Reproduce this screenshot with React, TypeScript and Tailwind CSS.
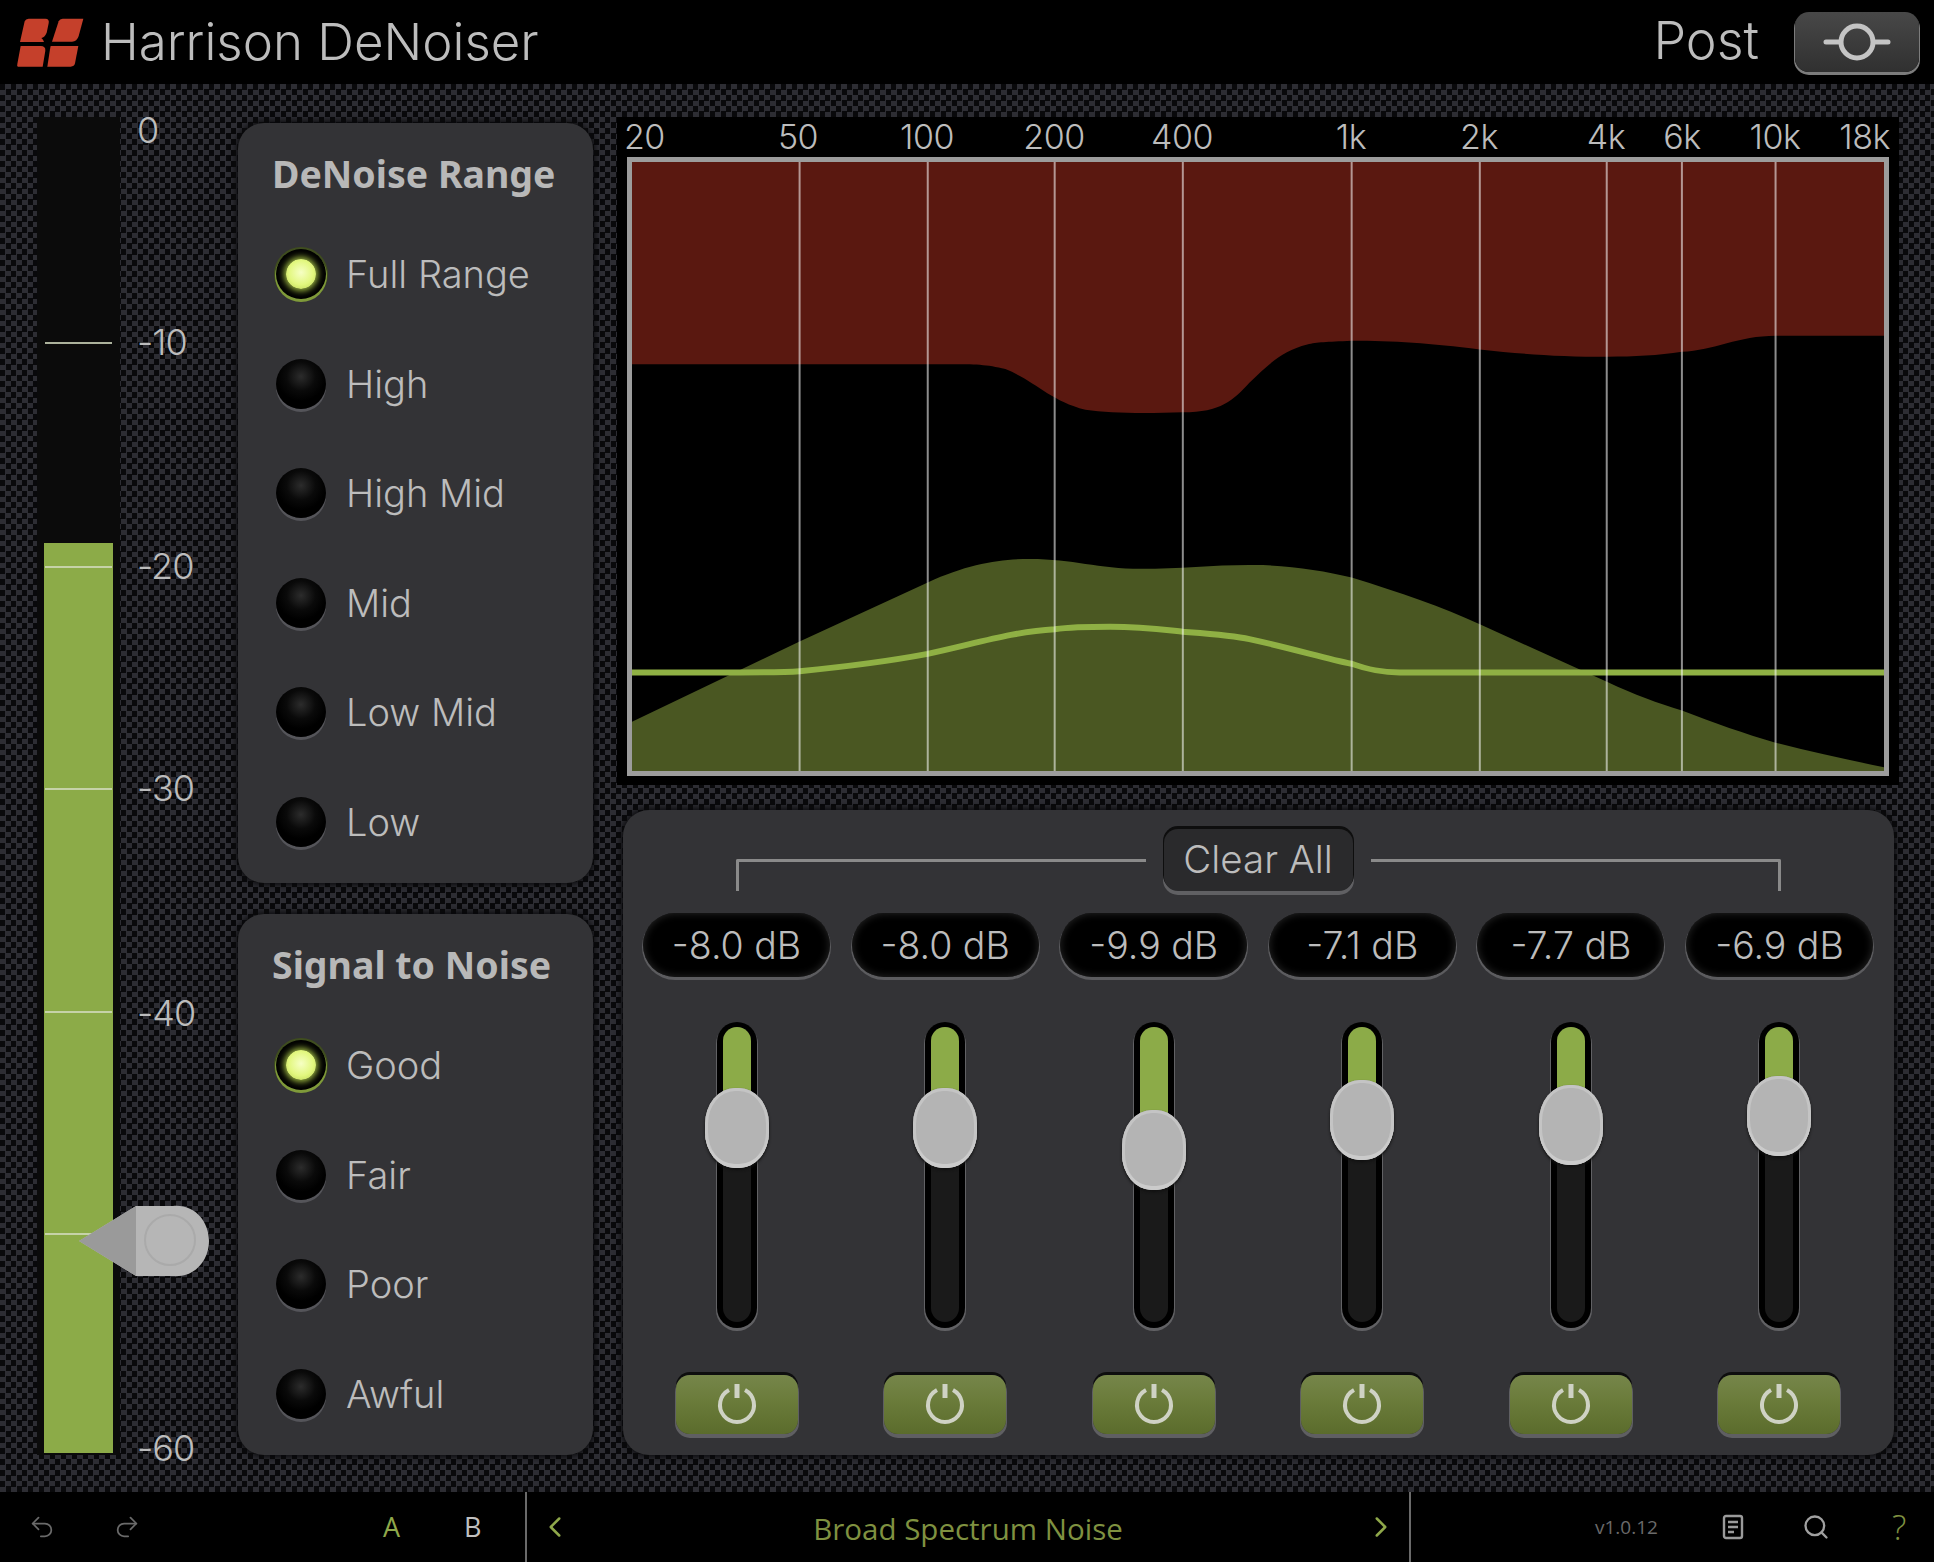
import { Undo2, Redo2, ChevronLeft, ChevronRight, Search } from "lucide-react";

const scaleLabels = [
  { text: "0", mt: "mt-[-11px]" },
  { text: "-10", mt: "mt-[164px]" },
  { text: "-20", mt: "mt-[176px]" },
  { text: "-30", mt: "mt-[174px]" },
  { text: "-40", mt: "mt-[177px]" },
  { text: "-60", mt: "mt-[387px]" },
];

// meter ticks, px from the meter's top
const meterTicks = [225, 449, 671, 894, 1116];

const freqs = [
  { label: "50", x: 648 },
  { label: "100", x: 752 },
  { label: "200", x: 855 },
  { label: "400", x: 959 },
  { label: "1k", x: 1096 },
  { label: "2k", x: 1200 },
  { label: "4k", x: 1303 },
  { label: "6k", x: 1364 },
  { label: "10k", x: 1440 },
];

const bands = [
  { db: "-8.0 dB", thumb: 106 },
  { db: "-8.0 dB", thumb: 106 },
  { db: "-9.9 dB", thumb: 128 },
  { db: "-7.1 dB", thumb: 98 },
  { db: "-7.7 dB", thumb: 103 },
  { db: "-6.9 dB", thumb: 94 },
];

function Logo() {
  return (
    <svg width="84" height="64" viewBox="0 0 252 192" className="ml-[-9px]">
      <g fill="#c5402b">
        <path d="M50 34Q53 26 62 26H112Q125 26 122 40L116 68Q110 82 100 84Q106 88 108 96H36Z" />
        <path d="M152 34Q155 26 164 26H226L212 78Q207 95 192 95H132Z" />
        <path d="M38 108H98Q113 108 112 122L104 170H30Q26 170 28 162Z" />
        <path d="M128 108H211L201 160Q199 170 188 170H118L126 118Z" />
      </g>
    </svg>
  );
}

function Led({ on }: { on?: boolean }) {
  return (
    <div
      className={
        on
          ? "flex h-[50px] w-[50px] shrink-0 items-center justify-center rounded-full bg-[#000] shadow-[0_2px_0_1px_#7f9a3a,0_0_0_2px_#3f4d1f]"
          : "flex h-[50px] w-[50px] shrink-0 items-center justify-center rounded-full bg-[radial-gradient(circle_at_50%_35%,#2c2c2c_0%,#0a0a0a_35%,#000_60%)] shadow-[0_3px_0_0_#55555a]"
      }
    >
      {on && <div className="h-[30px] w-[30px] rounded-full bg-[radial-gradient(circle_at_50%_45%,#f6ffc4_0%,#e2f77e_55%,#b5cf4e_100%)] shadow-[0_0_6px_2px_#9fbb42]" />}
    </div>
  );
}

function RadioPanel({ title, items, className }: { title: string; items: string[]; className: string }) {
  return (
    <div className={"flex flex-col rounded-[26px] bg-[#333336] pl-[38px] pt-[30px] shadow-[0_0_6px_2px_#0a0a0c] " + className}>
      <div className="mb-[54px] ml-[-4px] font-['Noto_Sans'] text-[37.5px] leading-[42px] font-bold text-[#b8b8b8]">{title}</div>
      <div className="flex flex-col gap-[59.5px]">
        {items.map((item, i) => (
          <div key={item} className="flex items-center gap-[20px]">
            <Led on={i === 0} />
            <span className="font-['Inter'] text-[38px] leading-[50px] font-light text-[#bcbcbc]">{item}</span>
          </div>
        ))}
      </div>
    </div>
  );
}

function Spectrum() {
  return (
    <div className="flex h-[668px] w-[1282px] flex-col bg-black pl-[10px] pr-[10px]">
      <div className="relative h-[40px] shrink-0 font-['Inter'] text-[34px] leading-[40px] font-light tracking-[-0.5px] text-[#bcbcbc]">
        <span className="absolute left-[-3px] top-0">20</span>
        {freqs.map((f) => (
          <span
            key={f.label}
            className="absolute top-0 -translate-x-1/2"
            style={{ left: Math.round((f.x - 509) * 1.2334) }}
          >
            {f.label}
          </span>
        ))}
        <span className="absolute right-[-1px] top-0">18k</span>
      </div>
      <div className="h-[619px] border-[5px] border-[#9c9c9c]">
        <svg viewBox="512 132 1016 494" preserveAspectRatio="none" className="block h-full w-full">
          <path
            d="M512 132H1528V273H1440C1410 273 1390 285 1364 286C1345 289 1325 290 1304 290C1265 290 1235 288 1200 284C1160 279 1130 277 1096 277C1075 278 1068 278 1060 280C1040 285 1030 295 1013 311C1000 325 990 335 959 335C930 336 900 336 880 333C850 325 840 310 815 300C800 296 790 296 770 296H512Z"
            fill="#5a1810"
          />
          <path
            d="M512 586L648 521L752 473C785 458 810 454 835 454C870 454 890 462 925 462C960 462 990 458 1024 459C1050 460 1075 464 1096 469C1135 481 1170 493 1200 507L1304 554C1325 564 1345 571 1364 577C1390 587 1415 596 1440 603C1470 611 1500 617 1528 623V626H512Z"
            fill="#4a5722"
          />
          <path
            d="M512 546H600C620 546 635 546 648 545C690 541 720 537 752 531C790 523 820 513 855 511C870 509 885 509 900 509C925 509 940 511 959 513C985 515 1000 516 1013 519C1050 527 1075 535 1096 539C1110 544 1120 546 1135 546H1528"
            fill="none"
            stroke="#8fb044"
            strokeWidth="6"
            vectorEffect="non-scaling-stroke"
          />
          {freqs.map((f) => (
            <line
              key={f.x}
              x1={f.x}
              x2={f.x}
              y1="132"
              y2="626"
              stroke="#ffffff"
              strokeOpacity="0.55"
              strokeWidth="2"
              vectorEffect="non-scaling-stroke"
            />
          ))}
        </svg>
      </div>
    </div>
  );
}

function Fader({ thumb }: { thumb: number }) {
  return (
    <div className="relative h-[306px] w-[40px] rounded-full bg-black shadow-[0_2px_0_1px_#616164]">
      <div className="absolute inset-x-[6px] bottom-[6px] top-[5px] overflow-hidden rounded-full bg-[#1a1a1a]">
        <div className="bg-[#8cab48]" style={{ height: thumb }} />
      </div>
      <div
        className="absolute left-1/2 h-[80px] w-[64px] -translate-x-1/2 -translate-y-1/2 rounded-[30px/36px] bg-[#b4b4b4] shadow-[inset_0_-4px_0_#cbcbcb,inset_0_0_0_3px_#c4c4c4,0_2px_3px_#111]"
        style={{ top: thumb }}
      />
    </div>
  );
}

function Channel({ db, thumb }: { db: string; thumb: number }) {
  return (
    <div className="flex w-[187px] flex-col items-center">
      <div className="flex h-[64px] w-[187px] items-center justify-center rounded-full bg-black pt-[3px] font-['Inter'] text-[37.5px] font-light text-[#bcbcbc] shadow-[inset_0_0_8px_#2a2a2a,0_2px_0_1px_#5c5c5f]">
        {db}
      </div>
      <div className="mt-[45px]">
        <Fader thumb={thumb} />
      </div>
      <div className="mt-[47px] flex h-[59px] w-[122px] items-center justify-center rounded-[14px] bg-[linear-gradient(#76864a,#6a7b3a_45%,#5b6c2c)] pb-[3px] shadow-[0_-3px_0_0_#0e0e0e,0_3px_0_1px_#5f5f62]">
        <PowerIcon />
      </div>
    </div>
  );
}

function PowerIcon() {
  return (
    <svg width="42" height="44" viewBox="0 0 42 44" fill="none" stroke="#cfd2c4" strokeWidth="4" strokeLinecap="round">
      <path d="M13 9A17 17 0 1 0 29 9" strokeLinecap="butt" />
      <path d="M21 3V17" strokeWidth="5" strokeLinecap="butt" />
    </svg>
  );
}

export default function App() {
  return (
    <div className="flex h-[1562px] w-[1934px] flex-col overflow-hidden bg-black">
      {/* Header */}
      <header className="flex h-[84px] shrink-0 items-center bg-black pl-[17px] pr-[15px]">
        <Logo />
        <h1 className="ml-[9px] pb-[2px] font-['Inter'] text-[51px] leading-none font-light text-[#bdbdbd]">Harrison DeNoiser</h1>
        <span className="ml-auto pb-[2px] font-['Inter'] text-[52px] leading-none font-light text-[#bdbdbd]">Post</span>
        <div className="ml-[36px] flex h-[60px] w-[124px] items-center justify-center rounded-[14px] bg-[linear-gradient(#484848,#303030)] shadow-[0_2px_0_1px_#7c7c7c]">
          <svg width="68" height="42" viewBox="0 0 68 42" fill="none" stroke="#c4c4c4" strokeWidth="5" strokeLinecap="round">
            <circle cx="34" cy="21" r="16" />
            <path d="M3 21H17M51 21H65" />
          </svg>
        </div>
      </header>

      {/* Main */}
      <main className="flex h-[1408px] shrink-0 bg-[conic-gradient(#2d2d33_25%,#09090b_0_50%,#2d2d33_0_75%,#09090b_0)] bg-[length:11px_11px] pb-[37px] pl-[37px] pr-[35px] pt-[33px]">
        {/* Meter */}
        <div className="relative h-[1338px] w-[83px] shrink-0 bg-[#0b0b0b]">
          <div className="absolute inset-x-[7px] bottom-[2px] top-[426px] bg-[#8cab48]" />
          {meterTicks.map((t) => (
            <div key={t} className="absolute left-[8px] right-[8px] h-[2px] bg-[#d4dcc0] opacity-80" style={{ top: t }} />
          ))}
          <svg width="134" height="74" viewBox="0 0 134 74" className="absolute left-[39px] top-[1087px]">
            <path d="M3 37L60 2H97C119 0 133 18 133 37C133 56 119 74 97 72H60Z" fill="#b6b6b6" />
            <path d="M3 37L60 2V72Z" fill="#9a9a9a" />
            <circle cx="94" cy="36" r="25" fill="#b6b6b6" stroke="#aaaaaa" strokeWidth="2" />
          </svg>
        </div>

        {/* dB scale */}
        <div className="flex h-[1338px] w-[118px] shrink-0 flex-col pl-[17px] font-['Inter'] text-[36px] leading-[48px] font-light tracking-[-1px] text-[#bcbcbc]">
          {scaleLabels.map((l) => (
            <span key={l.text} className={l.mt}>
              {l.text}
            </span>
          ))}
        </div>

        {/* Radio panels */}
        <div className="flex w-[355px] shrink-0 flex-col gap-[31px] pt-[6px]">
          <RadioPanel title="DeNoise Range" className="h-[760px]" items={["Full Range", "High", "High Mid", "Mid", "Low Mid", "Low"]} />
          <RadioPanel title="Signal to Noise" className="h-[541px]" items={["Good", "Fair", "Poor", "Awful"]} />
        </div>

        {/* Graph and bands */}
        <div className="ml-[24px] flex flex-col items-center">
          <Spectrum />
          <div className="mt-[25px] flex h-[645px] w-[1271px] flex-col items-center rounded-[26px] bg-[#333336] pt-[19px] shadow-[0_0_6px_2px_#0a0a0c]">
            <div className="flex w-[1045px] items-start">
              <div className="mt-[30px] h-[32px] flex-1 rounded-tl-[2px] border-l-[3px] border-t-[3px] border-[#8a8a8a]" />
              <div className="mx-[18px] flex h-[62px] w-[189px] items-center justify-center rounded-[14px] bg-[#2a2a2c] font-['Inter'] text-[38.5px] font-light text-[#bcbcbc] shadow-[0_-2px_0_1px_#0e0e0e,0_3px_0_1px_#606063]">
                Clear All
              </div>
              <div className="mt-[30px] h-[32px] flex-1 rounded-tr-[2px] border-r-[3px] border-t-[3px] border-[#8a8a8a]" />
            </div>
            <div className="mt-[22px] flex gap-[21.6px]">
              {bands.map((b, i) => (
                <Channel key={i} db={b.db} thumb={b.thumb} />
              ))}
            </div>
          </div>
        </div>
      </main>

      {/* Footer */}
      <footer className="flex h-[70px] shrink-0 items-stretch bg-black font-['Open_Sans'] text-[#9a9a9a]">
        <div className="flex w-[525px] shrink-0 items-center pl-[28px]">
          <Undo2 size={28} strokeWidth={1.5} className="text-[#6a6a6a]" />
          <Redo2 size={28} strokeWidth={1.5} className="ml-[57px] text-[#6a6a6a]" />
          <span className="ml-[242px] text-[27px] font-medium text-[#8fa84a]">A</span>
          <span className="ml-[64px] text-[27px] font-medium text-[#c0c0c0]">B</span>
        </div>
        <div className="flex w-[886px] shrink-0 items-center justify-between border-x-2 border-[#6a6a6a] pl-[11px] pr-[11px]">
          <ChevronLeft size={34} strokeWidth={1.75} className="text-[#8fa84a]" />
          <span className="pt-[5px] text-[29.5px] text-[#7f9140]">Broad Spectrum Noise</span>
          <ChevronRight size={34} strokeWidth={1.75} className="text-[#8fa84a]" />
        </div>
        <div className="flex flex-1 items-center pl-[184px]">
          <span className="text-[19px] text-[#6a6a6a]">v1.0.12</span>
          <svg width="22" height="26" viewBox="0 0 22 26" fill="none" stroke="#9a9a9a" strokeWidth="2.4" className="ml-[64px]">
            <rect x="2" y="2" width="18" height="22" rx="2" />
            <path d="M6 8H16M6 13H16M6 18H12" />
          </svg>
          <Search size={28} strokeWidth={2} className="ml-[58px] text-[#a0a0a0]" />
          <span className="ml-[62px] text-[34px] font-light text-[#7f9140]">?</span>
        </div>
      </footer>
    </div>
  );
}
